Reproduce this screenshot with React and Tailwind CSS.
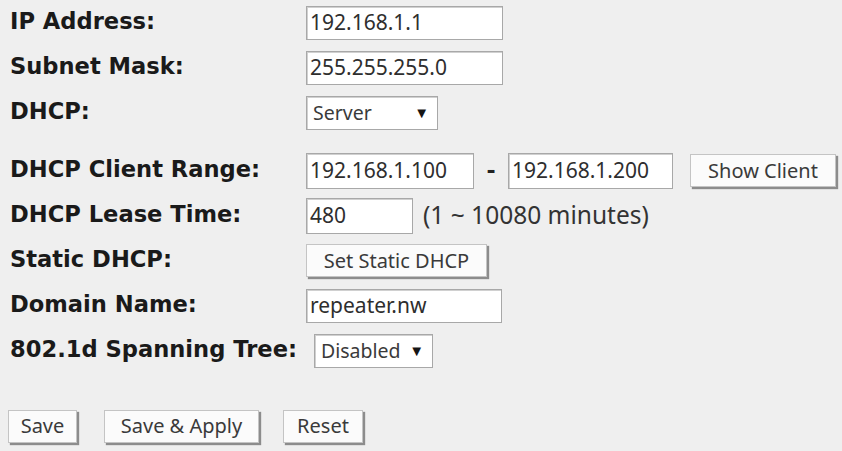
import React from "react";

const labelCls =
  "font-['DejaVu_Sans',sans-serif] font-bold text-[22.6px] text-[#1a1a1a] whitespace-nowrap leading-none";
const inputCls =
  "h-[34px] bg-white border border-[#a8a8a8] shadow-[inset_1px_1px_0_#d0d0d0] px-[3px] flex items-center font-['Noto_Sans',sans-serif] text-[21px] text-[#2e2e2e] leading-none";
const selectCls =
  "h-[34px] bg-white border border-[#a8a8a8] shadow-[inset_1px_1px_0_#d0d0d0] flex items-center justify-between pl-[6px] pr-[8px] font-['Noto_Sans',sans-serif] text-[19.5px] text-[#3a3a3a] leading-none";
const btnCls =
  "h-[33px] bg-[#fbfbfb] border border-[#c4c4c4] shadow-[2px_2px_1px_#8c8c8c] flex items-center justify-center font-['Noto_Sans',sans-serif] text-[20px] text-[#3a3a3a] leading-none whitespace-nowrap";

function Row({ label, children, className = "" }) {
  return (
    <div className={`flex items-center h-[45px] ${className}`}>
      <div className="w-[306px] shrink-0 pl-[10px]">
        <span className={labelCls}>{label}</span>
      </div>
      <div className="flex items-center">{children}</div>
    </div>
  );
}

function Select({ value, width }) {
  return (
    <div className={selectCls} style={{ width }}>
      <span>{value}</span>
      <span className="text-[15px] text-[#151515]">▼</span>
    </div>
  );
}

export default function App() {
  return (
    <div className="w-[842px] h-[451px] bg-[#efefef] overflow-hidden">
      <Row label="IP Address:">
        <div className={`${inputCls} w-[197px]`}>192.168.1.1</div>
      </Row>
      <Row label="Subnet Mask:">
        <div className={`${inputCls} w-[197px]`}>255.255.255.0</div>
      </Row>
      <Row label="DHCP:">
        <Select value="Server" width="132px" />
      </Row>
      <Row label="DHCP Client Range:" className="mt-[13px]">
        <div className={`${inputCls} w-[168px] h-[36px]`}>192.168.1.100</div>
        <span className="w-[34px] text-center font-['DejaVu_Sans',sans-serif] font-bold text-[22px] text-[#222]">
          -
        </span>
        <div className={`${inputCls} w-[165px] h-[36px]`}>192.168.1.200</div>
        <div className={`${btnCls} w-[146px] ml-[17px]`}>Show Client</div>
      </Row>
      <Row label="DHCP Lease Time:">
        <div className={`${inputCls} w-[107px] h-[36px]`}>480</div>
        <span className="ml-[10px] font-['Noto_Sans',sans-serif] text-[24.5px] text-[#333] leading-none">
          (1 ~ 10080 minutes)
        </span>
      </Row>
      <Row label="Static DHCP:">
        <div className={`${btnCls} w-[181px]`}>Set Static DHCP</div>
      </Row>
      <Row label="Domain Name:">
        <div className={`${inputCls} w-[196px]`}>repeater.nw</div>
      </Row>
      <Row label="802.1d Spanning Tree:">
        <div className="ml-[8px]">
          <Select value="Disabled" width="119px" />
        </div>
      </Row>
      <div className="flex items-center h-[46px] mt-[30px] pl-[8px]">
        <div className={`${btnCls} w-[69px]`}>Save</div>
        <div className={`${btnCls} w-[155px] ml-[27px]`}>Save &amp; Apply</div>
        <div className={`${btnCls} w-[80px] ml-[24px]`}>Reset</div>
      </div>
    </div>
  );
}
